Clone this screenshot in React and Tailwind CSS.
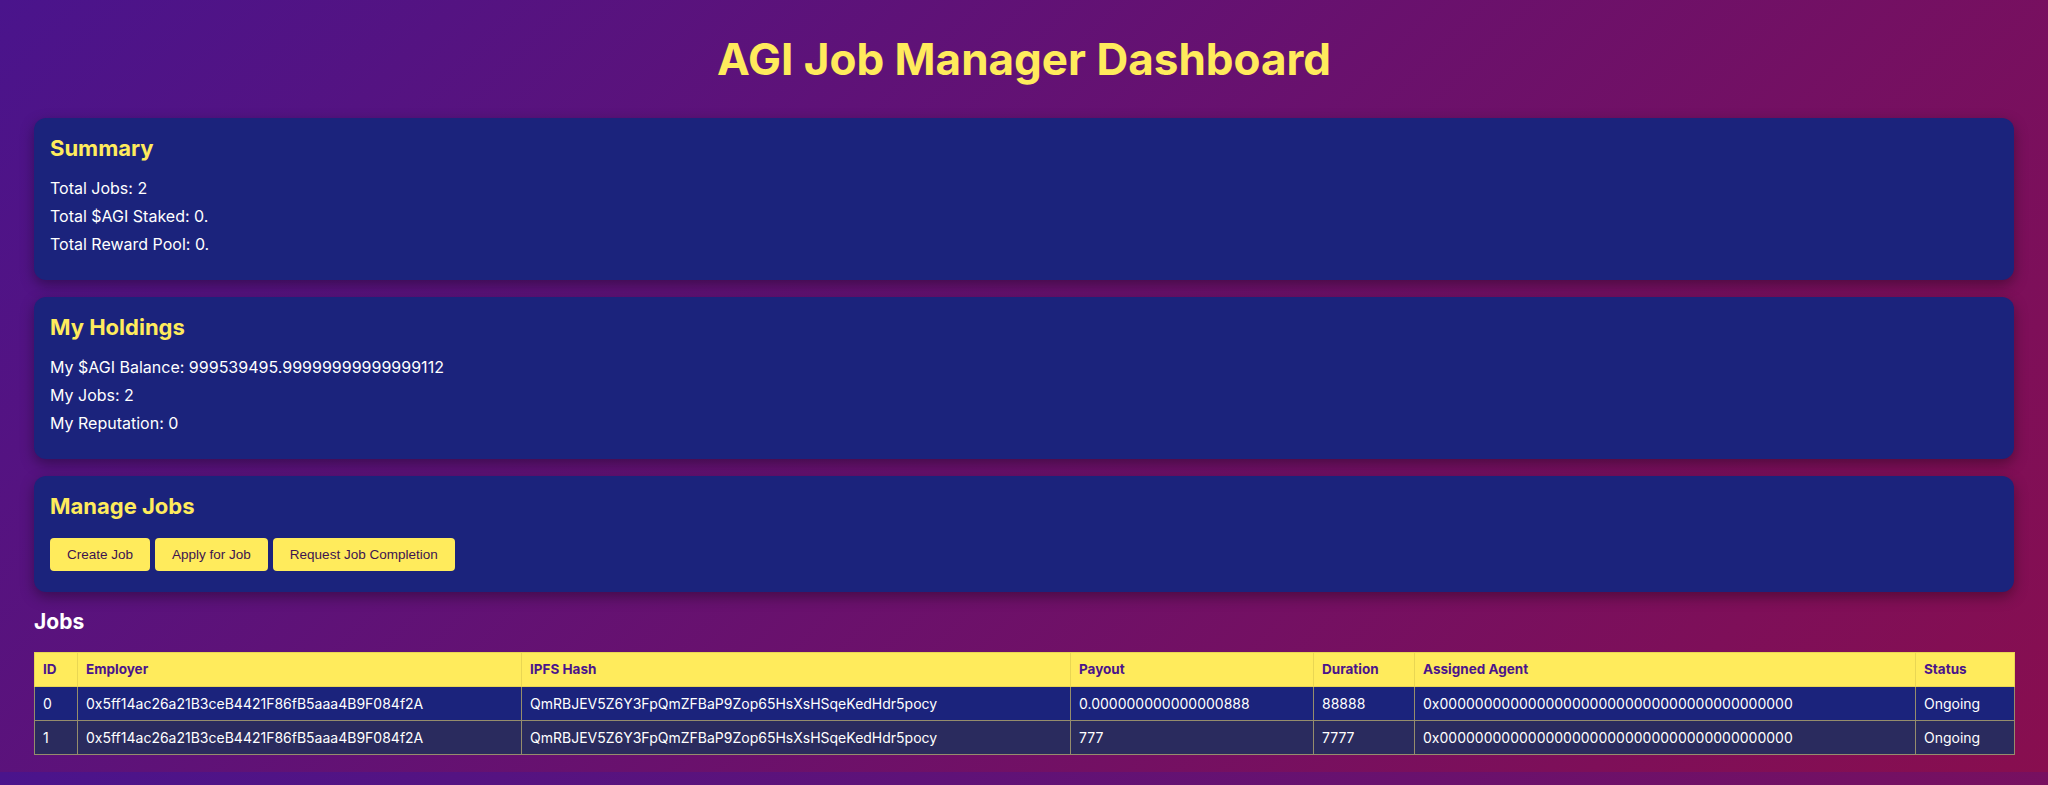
import React from 'react';

const jobs = [
  {
    id: 0,
    employer: '0x5ff14ac26a21B3ceB4421F86fB5aaa4B9F084f2A',
    ipfsHash: 'QmRBJEV5Z6Y3FpQmZFBaP9Zop65HsXsHSqeKedHdr5pocy',
    payout: '0.000000000000000888',
    duration: '88888',
    agent: '0x0000000000000000000000000000000000000000',
    status: 'Ongoing',
  },
  {
    id: 1,
    employer: '0x5ff14ac26a21B3ceB4421F86fB5aaa4B9F084f2A',
    ipfsHash: 'QmRBJEV5Z6Y3FpQmZFBaP9Zop65HsXsHSqeKedHdr5pocy',
    payout: '777',
    duration: '7777',
    agent: '0x0000000000000000000000000000000000000000',
    status: 'Ongoing',
  },
];

const columns = [
  { label: 'ID', width: 'w-[43px]' },
  { label: 'Employer', width: 'w-[444px]' },
  { label: 'IPFS Hash', width: 'w-[549px]' },
  { label: 'Payout', width: 'w-[243px]' },
  { label: 'Duration', width: 'w-[101px]' },
  { label: 'Assigned Agent', width: 'w-[501px]' },
  { label: 'Status', width: 'w-[99px]' },
];

function Card({ title, children }) {
  return (
    <section className="rounded-[12px] bg-[#1b237c] px-4 pt-4 shadow-[0_5px_14px_rgba(0,0,0,0.35)]">
      <h2 className="h-[28px] text-[22px] font-bold leading-[28px] text-[#ffeb5c]">{title}</h2>
      {children}
    </section>
  );
}

function StatLines({ lines }) {
  return (
    <div className="mt-3 pb-[22px]">
      {lines.map((line) => (
        <p key={line} className="h-[28px] text-[16px] leading-[28px] text-white">
          {line}
        </p>
      ))}
    </div>
  );
}

function ActionButton({ children }) {
  return (
    <button
      type="button"
      className="rounded-[4px] bg-[#ffeb5c] px-[17px] py-[9px] text-[13.5px] leading-[15px] text-[#3c1450] [font-family:'Liberation_Sans',Arial,sans-serif]"
    >
      {children}
    </button>
  );
}

export default function App() {
  return (
    <div className="min-h-[785px] bg-[linear-gradient(135deg,#4a148c,#880e4f)] bg-[length:100%_772px] [font-family:Inter,sans-serif]">
      <div className="px-[34px] pt-[35px] pb-[17px]">
        <h1 className="h-[48px] text-center text-[44px] font-bold leading-[48px] text-[#ffeb5c]">
          AGI Job Manager Dashboard
        </h1>

        <div className="mt-[35px] flex flex-col gap-[17px]">
          <Card title="Summary">
            <StatLines lines={['Total Jobs: 2', 'Total $AGI Staked: 0.', 'Total Reward Pool: 0.']} />
          </Card>
          <Card title="My Holdings">
            <StatLines
              lines={['My $AGI Balance: 999539495.99999999999999112', 'My Jobs: 2', 'My Reputation: 0']}
            />
          </Card>
          <Card title="Manage Jobs">
            <div className="mt-[18px] flex gap-[5px] pb-[21px]">
              <ActionButton>Create Job</ActionButton>
              <ActionButton>Apply for Job</ActionButton>
              <ActionButton>Request Job Completion</ActionButton>
            </div>
          </Card>
        </div>

        <h2 className="mt-4 h-[28px] text-[21px] font-bold leading-[28px] text-white">Jobs</h2>

        <table className="mt-4 w-full table-fixed border-collapse text-[14px] text-white">
          <thead>
            <tr className="bg-[#ffeb5c]">
              {columns.map((col) => (
                <th
                  key={col.label}
                  className={`${col.width} border border-[#e9d653] px-2 py-2 text-left text-[13.5px] font-bold leading-[17px] text-[#4a148c]`}
                >
                  {col.label}
                </th>
              ))}
            </tr>
          </thead>
          <tbody>
            {jobs.map((job, i) => (
              <tr key={job.id} className={i % 2 === 0 ? 'bg-[#1b237c]' : 'bg-[#2a2b5e]'}>
                {[job.id, job.employer, job.ipfsHash, job.payout, job.duration, job.agent, job.status].map(
                  (value, j) => (
                    <td
                      key={j}
                      className="border border-[#958d6c] px-2 py-2 leading-[17px] whitespace-nowrap overflow-hidden"
                    >
                      {value}
                    </td>
                  )
                )}
              </tr>
            ))}
          </tbody>
        </table>
      </div>
    </div>
  );
}
